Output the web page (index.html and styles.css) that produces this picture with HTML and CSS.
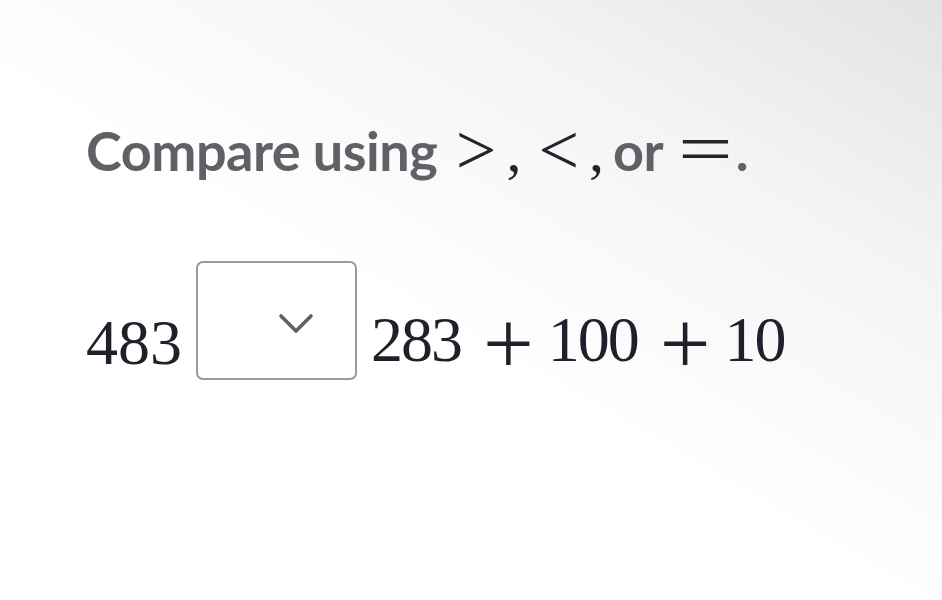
FILE: index.html
```html
<!DOCTYPE html>
<html>
<head>
<meta charset="utf-8">
<link rel="stylesheet" href="styles.css">
</head>
<body>
<main class="page">
  <h1 class="prompt">Compare using <span class="rel gt">&gt;</span><span class="mcomma">,</span><span class="rel lt">&lt;</span><span class="mcomma">,</span><span class="word">or</span><span class="rel eq">=</span>.</h1>
  <div class="equation">
    <span class="num">483</span>
    <div class="select">
      <svg class="chev" viewBox="0 0 36 21" width="36" height="21"><path d="M3 3 L18 18 L33 3" fill="none" stroke="#5f6066" stroke-width="3.6" stroke-linecap="round" stroke-linejoin="round"/></svg>
    </div>
    <span class="expr"><span class="num">283</span><span class="op">+</span><span class="num">100</span><span class="op">+</span><span class="num">10</span></span>
  </div>
</main>
</body>
</html>
```
FILE: styles.css
```css
html, body {
  margin: 0;
  height: 100%;
}
body {
  background: linear-gradient(210deg, #e3e3e3 0%, #f4f4f4 25%, #ffffff 55%);
}
.page {
  padding: 118px 0 0 86px;
}
.prompt {
  margin: 0;
  font-family: Lato, "Liberation Sans", sans-serif;
  font-weight: 700;
  font-size: 54px;
  line-height: 66px;
  color: #5f6166;
  letter-spacing: -0.5px;
  white-space: nowrap;
}
.rel, .mcomma {
  display: inline-block;
  font-family: "Liberation Serif", serif;
  font-weight: 400;
  color: #22232b;
  letter-spacing: 0;
  line-height: 0;
}
.rel { font-size: 72px; transform: translateY(3px); }
.gt { margin-left: 6px; }
.lt { margin-left: 17px; }
.eq { margin-left: 22px; transform: translateY(2px) scaleX(1.35); margin-right: 10px; }
.mcomma { font-size: 60px; margin-left: 10px; }
.word { margin-left: 9px; }
.equation {
  display: flex;
  align-items: flex-end;
  gap: 14px;
  margin-top: 77px;
}
.num {
  font-family: "Liberation Serif", serif;
  font-size: 64px;
  color: #1f2029;
  line-height: 1;
  margin-bottom: 5px;
}
.expr {
  display: flex;
  align-items: baseline;
  margin-bottom: 4px;
}
.expr .num { margin-bottom: 0; letter-spacing: -2px; }
.op {
  font-family: "Liberation Serif", serif;
  font-size: 90px;
  line-height: 1;
  color: #1f2029;
  margin: 0 14px 0 22px;
  transform: translateY(13px);
}
.select {
  box-sizing: border-box;
  width: 161px;
  height: 119px;
  border: 2px solid #9a9a9c;
  border-radius: 7px;
  background: #fff;
  display: flex;
  justify-content: center;
  padding-top: 50px;
}
.chev { display: block; margin-left: 38px; }
```
